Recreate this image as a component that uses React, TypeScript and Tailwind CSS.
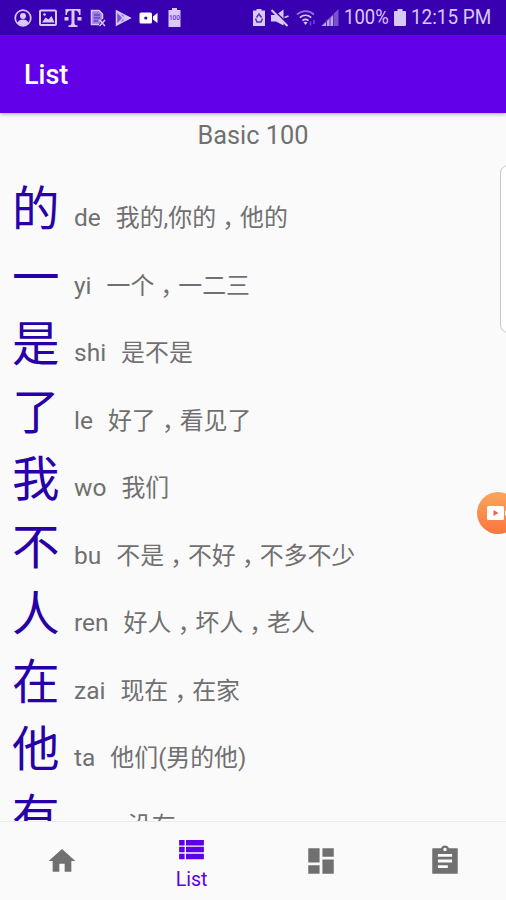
import React from "react";
import { MdDashboard, MdHome, MdViewList } from "react-icons/md";

interface Word {
  hanzi: string;
  pinyin: string;
  examples: string;
}

const words: Word[] = [
  { hanzi: "的", pinyin: "de", examples: "我的,你的，他的" },
  { hanzi: "一", pinyin: "yi", examples: "一个，一二三" },
  { hanzi: "是", pinyin: "shi", examples: "是不是" },
  { hanzi: "了", pinyin: "le", examples: "好了，看见了" },
  { hanzi: "我", pinyin: "wo", examples: "我们" },
  { hanzi: "不", pinyin: "bu", examples: "不是，不好，不多不少" },
  { hanzi: "人", pinyin: "ren", examples: "好人，坏人，老人" },
  { hanzi: "在", pinyin: "zai", examples: "现在，在家" },
  { hanzi: "他", pinyin: "ta", examples: "他们(男的他)" },
  { hanzi: "有", pinyin: "you", examples: "没有" },
];

const NotificationIcons = () => (
  <div className="flex items-center gap-[7px] text-[#d9c9f6]">
    {/* account */}
    <svg width="18" height="18" viewBox="0 0 18 18" fill="none" stroke="currentColor" strokeWidth="1.7">
      <circle cx="9" cy="9" r="7.8" />
      <circle cx="9" cy="7" r="3" fill="currentColor" stroke="none" />
      <path d="M3.5 14c1-3 3-3.500 5.500-3.500s4.500.5 5.500 3.500c-3 3-8 3-11 0z" fill="currentColor" stroke="none" />
    </svg>
    {/* picture */}
    <svg width="18" height="18" viewBox="0 0 18 18" fill="none" stroke="currentColor" strokeWidth="2">
      <rect x="1" y="1.500" width="16" height="14.500" rx="1" />
      <path d="M3 13.500l3.500-5 3 2 3-3.500 3 6.500z" fill="currentColor" stroke="none" />
      <circle cx="5.500" cy="5.500" r="1.300" fill="currentColor" stroke="none" />
    </svg>
    {/* carrier */}
    <svg width="18" height="18" viewBox="0 0 18 18" fill="currentColor">
      <path d="M1.500 0h15v6h-1.400c0-2.700-1.300-4.400-4.600-4.400V14c0 1.700.8 2.300 3 2.300V18h-9v-1.700c2.200 0 3-.6 3-2.300V1.600C4.200 1.600 2.900 3.300 2.900 6H1.500z" />
      <path d="M.5 8h4v3.500h-4zM13.500 8h4v3.500h-4z" />
    </svg>
    {/* document */}
    <svg width="18" height="18" viewBox="0 0 18 18" fill="none" stroke="currentColor" strokeWidth="1.500">
      <path d="M10 15.500H2.500v-14h7.500l3.500 3.500v5" fill="#9c7ee0" />
      <path d="M5 6h6M5 9h6M5 12h4" stroke="#5322b5" strokeWidth="1.200" />
      <path d="M10.500 11l5.500 6M16 11l-5.500 6" />
    </svg>
    {/* play store */}
    <svg width="18" height="18" viewBox="0 0 18 18" fill="none" stroke="currentColor" strokeWidth="1.500">
      <path d="M2.500 2v14l13.500-7z" fill="#7a55d0" />
      <path d="M2.500 2l9 9.500M2.500 16l9-9.500" />
      <path d="M12 6.500L17 9l-5 2.500L10 9z" fill="currentColor" stroke="none" />
    </svg>
    {/* camera */}
    <svg width="19" height="18" viewBox="0 0 19 18" fill="#ffffff">
      <path d="M2 3.500h9.500q1.500 0 1.500 1.500v8q0 1.500-1.500 1.500H2Q.5 14.500.5 13V5Q.5 3.500 2 3.500z" />
      <path d="M14 7.500l4.500-3.500v10L14 10.500z" />
      <circle cx="6.800" cy="9" r="1.600" fill="#3c00b3" />
    </svg>
    {/* battery full notice */}
    <svg className="ml-[2px]" width="15" height="19" viewBox="0 0 15 19" fill="currentColor">
      <path d="M5 0h5v2h3.500v17h-12V2H5z" />
      <text x="7.500" y="12" fontSize="6.500" fontFamily="Roboto, sans-serif" fontWeight="700" textAnchor="middle" fill="#7347c9">
        100
      </text>
    </svg>
  </div>
);

const SystemStatus = () => (
  <div className="flex items-center text-[#d9c9f6]">
    {/* battery saver */}
    <svg className="mr-[6px]" width="12" height="17" viewBox="0 0 12 17" fill="currentColor">
      <path d="M3.500 0h5v1.500H12V17H0V1.500h3.500z" />
      <path d="M3.500 8.500L6 5l2.500 3.500M9.500 9.500l-1.500 3.500H4L2.500 9.500" fill="none" stroke="#5a2dbd" strokeWidth="1.500" />
    </svg>
    {/* muted speaker */}
    <svg className="mr-[7px]" width="18" height="18" viewBox="0 0 18 18" fill="currentColor">
      <path d="M0 6h5l7.500-5.500v16L5 12.500H0z" />
      <path d="M1.500 0l15.500 15.500" stroke="#3900b1" strokeWidth="1.800" />
      <path d="M.5 1l16 16" stroke="currentColor" strokeWidth="2" />
      <path d="M13.500 8.500l4-1.500" stroke="currentColor" strokeWidth="1.500" />
    </svg>
    {/* wifi */}
    <svg className="mr-[4px]" width="21" height="18" viewBox="0 0 21 18" fill="none" stroke="currentColor" strokeWidth="1.700">
      <path d="M1 5.500c5-4.500 12-4.500 17 0" stroke="#9473da" />
      <path d="M3.800 8.700c3.400-3 8-3 11.400 0M6.500 11.600c1.800-1.500 4.200-1.500 6 0" />
      <path d="M7.500 13.300q2-1.300 4 0l-2 2.700z" fill="currentColor" stroke="none" />
      <path d="M14.500 12.500v4M18 15v-4" stroke="#6c41c8" />
    </svg>
    {/* cell signal */}
    <svg className="mr-[5px]" width="18" height="17" viewBox="0 0 18 17">
      <path d="M0 17L17.500 0v17z" fill="#7950cd" />
      <path d="M1 17l11-10.500V17z" fill="#bea5ec" />
      <path d="M5.500 10v7M9 8v9M12.500 5v12" stroke="#5b2bbe" strokeWidth="1" />
    </svg>
    <span className="w-[45px] whitespace-nowrap">
      <span className="inline-block origin-left scale-x-[0.88]">100%</span>
    </span>
    <svg className="mr-[5px] ml-[5px]" width="12" height="17" viewBox="0 0 12 17" fill="currentColor">
      <path d="M3.500 0h5v2H11q1 0 1 1v13q0 1-1 1H1q-1 0-1-1V3q0-1 1-1h2.500z" />
    </svg>
    <span className="w-[81px] whitespace-nowrap">
      <span className="inline-block origin-left scale-x-[0.9]">12:15 PM</span>
    </span>
  </div>
);

// full-width commas sit in the middle of their cell, close to the baseline
const Examples = ({ text }: { text: string }) => (
  <span className="whitespace-nowrap">
    {text.split("，").map((part, index) => (
      <React.Fragment key={index}>
        {index > 0 && (
          <span className="inline-block translate-y-[8px] font-['Noto_Sans_CJK_TC',sans-serif] leading-none">，</span>
        )}
        {part}
      </React.Fragment>
    ))}
  </span>
);

const WordRow = ({ word }: { word: Word }) => (
  <div className="flex h-[67.5px] shrink-0 items-baseline pl-3">
    <span className="w-[62px] text-[47.500px] leading-[67.5px] text-[#2800a8]">{word.hanzi}</span>
    <span className="mr-[15px] text-[24.500px]">{word.pinyin}</span>
    <span className="text-[23.900px]">
      <Examples text={word.examples} />
    </span>
  </div>
);

const ClipboardIcon = () => (
  <svg width="34" height="34" viewBox="0 0 24 24" fill="currentColor">
    <path
      fillRule="evenodd"
      d="M3.300 3H9.180C9.600 1.840 10.700 1 12 1s2.400.84 2.820 2H20.700Q21 3 21 3.300V20.700Q21 21 20.700 21H3.300Q3 21 3 20.700V3.300Q3 3 3.300 3zM12 2.600c-.7 0-1.200.5-1.200 1.200S11.300 5 12 5s1.200-.5 1.200-1.200-.5-1.200-1.200-1.200zM7 7v2h10V7zM7 11v2h10v-2zM7 15v2h7v-2z"
    />
  </svg>
);

const BottomNav = () => (
  <nav className="flex h-[79px] shrink-0 items-center border-t border-[#ececec] bg-[#fafafa] text-[#707070]">
    <button className="flex w-[124px] justify-center">
      <MdHome size={32} />
    </button>
    <button className="flex w-[135px] flex-col items-center pt-[3px] text-[#5c00e6]">
      <MdViewList size={33} />
      <span className="pt-[2px] text-[19.500px] leading-[24px]">List</span>
    </button>
    <button className="flex w-[124px] justify-center">
      <MdDashboard size={34} />
    </button>
    <button className="flex w-[123px] justify-center">
      <ClipboardIcon />
    </button>
  </nav>
);

const App: React.FC = () => {
  return (
    <div className="relative flex h-[900px] w-[506px] flex-col overflow-hidden bg-[#fafafa] font-[Roboto,'Noto_Sans_CJK_SC',sans-serif] text-[#707070]">
      <div className="flex h-[35px] shrink-0 items-center justify-between bg-[#3900b1] pr-[14px] pl-[14px] text-[21px] leading-none text-[#d9c9f6]">
        <NotificationIcons />
        <SystemStatus />
      </div>
      <header className="z-10 flex h-[78px] shrink-0 items-center bg-[#6200ea] pt-[3px] pl-6 text-[27px] font-medium text-white shadow-[0_1px_4px_rgba(0,0,0,0.35)]">
        List
      </header>
      <main className="flex min-h-0 flex-1 flex-col overflow-hidden">
        <h2 className="h-[64px] shrink-0 pt-[4px] text-center text-[25.300px] leading-[37px]">Basic 100</h2>
        {words.map((word) => (
          <WordRow key={word.pinyin} word={word} />
        ))}
      </main>
      <BottomNav />

      {/* edge panel handle */}
      <div className="absolute top-[165px] left-[500px] h-[168px] w-[20px] rounded-[8px] border-[1.500px] border-[#c8c8c8] bg-white" />
      {/* floating recorder bubble */}
      <div className="absolute top-[492px] left-[477px] flex h-[42px] w-[42px] items-center rounded-full bg-linear-to-b from-[#fba65c] to-[#f9743f] pl-[10px]">
        <svg width="26" height="14" viewBox="0 0 26 14" fill="#fff">
          <rect x="0" y="0" width="17" height="14" rx="1.500" />
          <path d="M18 5l6-4v12l-6-4z" />
          <path d="M6.500 4l5 3-5 3z" fill="#f4605a" />
        </svg>
      </div>
    </div>
  );
};

export default App;
